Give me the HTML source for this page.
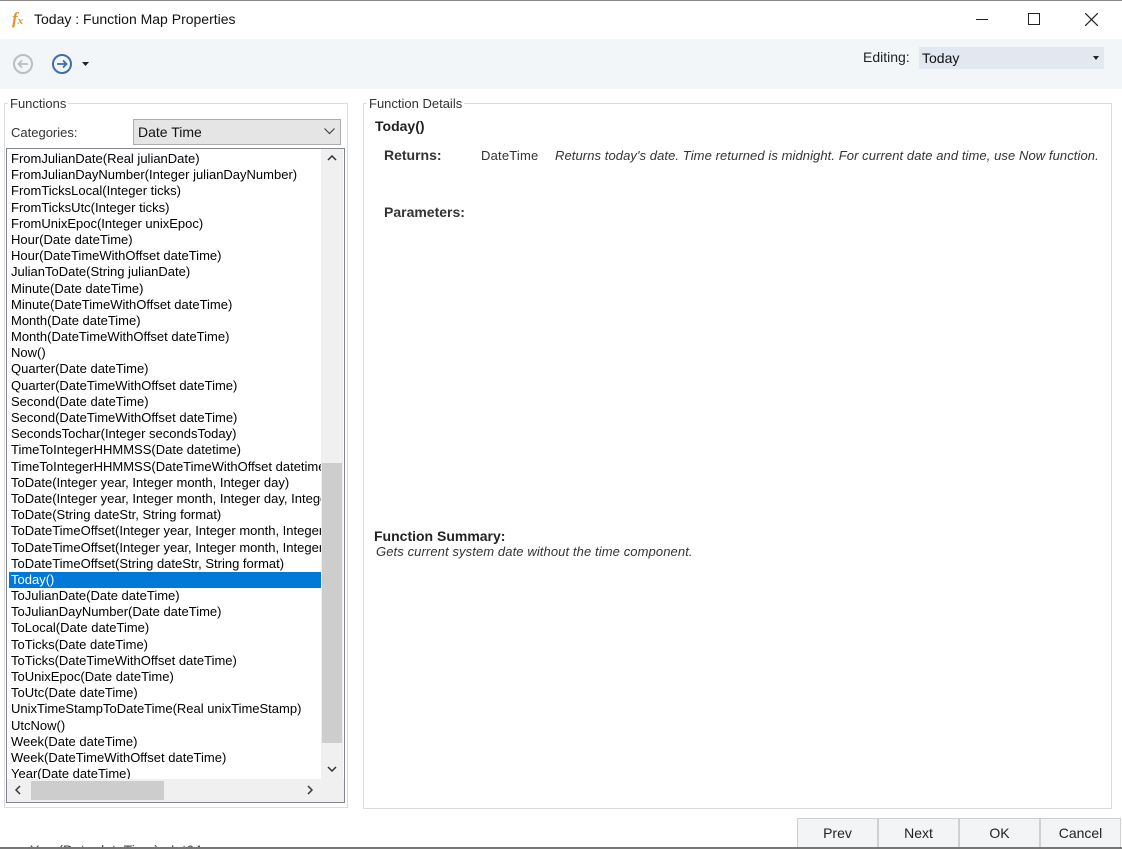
<!DOCTYPE html>
<html><head><meta charset="utf-8"><style>
*{box-sizing:border-box;margin:0;padding:0}
body{width:1122px;height:849px;background:#fff;position:relative;overflow:hidden;font-family:"Liberation Sans",sans-serif;font-size:13px;color:#000}
.abs{position:absolute}
.list div{height:16.2px;line-height:16.2px;padding-left:2px;white-space:nowrap;font-size:13px}
.btn{position:absolute;top:818px;height:30px;width:81px;background:#f3f4f6;border:1px solid #d0d0d0;text-align:center;line-height:28px;font-size:14px;color:#222}
</style></head><body>
<div class="abs" style="left:0;top:0;width:1122px;height:1px;background:#888"></div>
<div class="abs" style="left:12px;top:9px;font-family:'Liberation Serif',serif;font-style:italic;font-weight:bold;color:#e8912c;font-size:17px">f<span style="font-size:11px">x</span></div>
<div class="abs" style="left:34px;top:11px;font-size:14px;color:#111">Today : Function Map Properties</div>
<div class="abs" style="left:976px;top:19px;width:12px;height:1px;background:#222"></div>
<div class="abs" style="left:1028px;top:13px;width:12px;height:12px;border:1px solid #222"></div>
<svg class="abs" style="left:1085px;top:13px" width="13" height="13"><path d="M0 0L13 13M13 0L0 13" stroke="#222" stroke-width="1.2"/></svg>
<div class="abs" style="left:0;top:39px;width:1122px;height:50px;background:#f3f6f9"></div>
<svg class="abs" style="left:12px;top:53px" width="22" height="22"><circle cx="11" cy="11" r="9" fill="none" stroke="#bdbdbd" stroke-width="2"/><path d="M16 11H7M10 7.5L6.5 11L10 14.5" fill="none" stroke="#bdbdbd" stroke-width="1.8"/></svg>
<svg class="abs" style="left:51px;top:53px" width="22" height="22"><circle cx="11" cy="11" r="9" fill="none" stroke="#3a6fb0" stroke-width="2"/><path d="M6 11H15M12 7.5L15.5 11L12 14.5" fill="none" stroke="#3a6fb0" stroke-width="1.8"/></svg>
<svg class="abs" style="left:82px;top:62px" width="7" height="4"><path d="M0 0H7L3.5 4Z" fill="#222"/></svg>
<div class="abs" style="left:863px;top:49px;font-size:14px;color:#222">Editing:</div>
<div class="abs" style="left:919px;top:47px;width:185px;height:22px;background:#e1e8f0;font-size:14px;line-height:22px;padding-left:3px;color:#111">Today</div>
<svg class="abs" style="left:1093px;top:56px" width="6" height="4"><path d="M0 0H6L3 4Z" fill="#222"/></svg>

<div class="abs" style="left:4px;top:103px;width:344px;height:705px;border:1px solid #dcdcdc"></div>
<div class="abs" style="left:8px;top:96px;background:#fff;padding:0 2px;font-size:13px;color:#333">Functions</div>
<div class="abs" style="left:11px;top:125px;font-size:13px;color:#333">Categories:</div>
<div class="abs" style="left:133px;top:119px;width:208px;height:26px;background:#e5e5e5;border:1px solid #adadad;font-size:14px;line-height:24px;padding-left:4px;color:#111">Date Time</div>
<svg class="abs" style="left:324px;top:128px" width="11" height="7"><path d="M0.5 0.5L5.5 5.5L10.5 0.5" fill="none" stroke="#444" stroke-width="1.2"/></svg>
<div class="abs" style="left:6px;top:148px;width:339px;height:655px;border:1px solid #828790;overflow:hidden">
<div class="list abs" style="left:2px;top:2px;width:312px;overflow:hidden">
<div>FromJulianDate(Real julianDate)</div><div>FromJulianDayNumber(Integer julianDayNumber)</div><div>FromTicksLocal(Integer ticks)</div><div>FromTicksUtc(Integer ticks)</div><div>FromUnixEpoc(Integer unixEpoc)</div><div>Hour(Date dateTime)</div><div>Hour(DateTimeWithOffset dateTime)</div><div>JulianToDate(String julianDate)</div><div>Minute(Date dateTime)</div><div>Minute(DateTimeWithOffset dateTime)</div><div>Month(Date dateTime)</div><div>Month(DateTimeWithOffset dateTime)</div><div>Now()</div><div>Quarter(Date dateTime)</div><div>Quarter(DateTimeWithOffset dateTime)</div><div>Second(Date dateTime)</div><div>Second(DateTimeWithOffset dateTime)</div><div>SecondsTochar(Integer secondsToday)</div><div>TimeToIntegerHHMMSS(Date datetime)</div><div>TimeToIntegerHHMMSS(DateTimeWithOffset datetime)</div><div>ToDate(Integer year, Integer month, Integer day)</div><div>ToDate(Integer year, Integer month, Integer day, Integer hour)</div><div>ToDate(String dateStr, String format)</div><div>ToDateTimeOffset(Integer year, Integer month, Integer day)</div><div>ToDateTimeOffset(Integer year, Integer month, Integer day)</div><div>ToDateTimeOffset(String dateStr, String format)</div><div style="background:#0078d7;color:#fff">Today()</div><div>ToJulianDate(Date dateTime)</div><div>ToJulianDayNumber(Date dateTime)</div><div>ToLocal(Date dateTime)</div><div>ToTicks(Date dateTime)</div><div>ToTicks(DateTimeWithOffset dateTime)</div><div>ToUnixEpoc(Date dateTime)</div><div>ToUtc(Date dateTime)</div><div>UnixTimeStampToDateTime(Real unixTimeStamp)</div><div>UtcNow()</div><div>Week(Date dateTime)</div><div>Week(DateTimeWithOffset dateTime)</div><div>Year(Date dateTime)</div>
</div>
<div class="abs" style="left:314px;top:0;width:22px;height:631px;background:#f0f0f0"></div>
<div class="abs" style="left:315px;top:314px;width:20px;height:280px;background:#cdcdcd"></div>
<svg class="abs" style="left:320px;top:6px" width="10" height="6"><path d="M1 5L5 1L9 5" fill="none" stroke="#333" stroke-width="1.5"/></svg>
<svg class="abs" style="left:320px;top:617px" width="10" height="6"><path d="M1 1L5 5L9 1" fill="none" stroke="#333" stroke-width="1.5"/></svg>
<div class="abs" style="left:0;top:630px;width:337px;height:23px;background:#f0f0f0"></div>
<div class="abs" style="left:24px;top:632px;width:133px;height:19px;background:#cdcdcd"></div>
<svg class="abs" style="left:8px;top:636px" width="6" height="10"><path d="M5 1L1 5L5 9" fill="none" stroke="#333" stroke-width="1.5"/></svg>
<svg class="abs" style="left:300px;top:636px" width="6" height="10"><path d="M1 1L5 5L1 9" fill="none" stroke="#333" stroke-width="1.5"/></svg>
</div>

<div class="abs" style="left:363px;top:103px;width:749px;height:706px;border:1px solid #dcdcdc"></div>
<div class="abs" style="left:367px;top:96px;background:#fff;padding:0 2px;font-size:13px;color:#333">Function Details</div>
<div class="abs" style="left:375px;top:118px;font-size:14px;font-weight:bold;color:#222">Today()</div>
<div class="abs" style="left:384px;top:147px;font-size:14px;font-weight:bold;color:#333">Returns:</div>
<div class="abs" style="left:481px;top:148px;font-size:13px;color:#333;letter-spacing:0.2px">DateTime</div>
<div class="abs" style="left:555px;top:148px;font-size:13px;font-style:italic;color:#333;letter-spacing:0.08px">Returns today's date. Time returned is midnight. For current date and time, use Now function.</div>
<div class="abs" style="left:384px;top:204px;font-size:14px;font-weight:bold;color:#333">Parameters:</div>
<div class="abs" style="left:374px;top:528px;font-size:14px;font-weight:bold;color:#222">Function Summary:</div>
<div class="abs" style="left:376px;top:544px;font-size:13px;font-style:italic;color:#333;letter-spacing:0.1px">Gets current system date without the time component.</div>

<div class="abs" style="left:30px;top:840px;font-size:14px;color:#444;height:7px;overflow:hidden;line-height:20px">Year(Date dateTime) : Int64</div>
<div class="btn" style="left:797px">Prev</div>
<div class="btn" style="left:878px">Next</div>
<div class="btn" style="left:959px">OK</div>
<div class="btn" style="left:1040px">Cancel</div>
<div class="abs" style="left:0;top:847px;width:1122px;height:2px;background:#777"></div>
</body></html>
